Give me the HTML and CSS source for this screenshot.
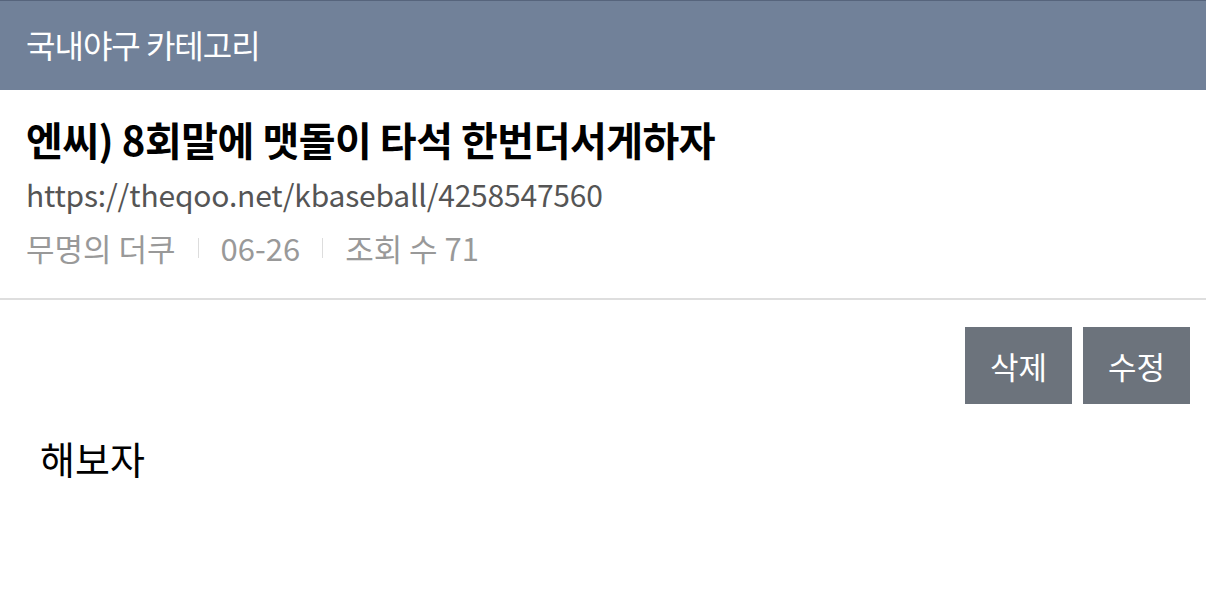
FILE: index.html
```html
<html>
<head>
   <meta charset="UTF-8">
   <title>국내야구 카테고리</title>
   <link rel="stylesheet" href="styles.css">
</head>
<body>

	<div class="top_bar">국내야구 카테고리</div>

	<div class="post_head">
		<h1 class="post_title">엔씨) 8회말에 맷돌이 타석 한번더서게하자</h1>
		<div class="post_url">https://theqoo.net/kbaseball/4258547560</div>
		<div class="post_meta">
			<span>무명의 더쿠</span>
			<span class="sep"></span>
			<span>06-26</span>
			<span class="sep"></span>
			<span>조회 수 71</span>
		</div>
	</div>

	<div class="post_btns">
		<button class="btn">삭제</button>
		<button class="btn">수정</button>
	</div>

	<div class="post_body">해보자</div>

</body>
</html>
```

FILE: styles.css
```css
body{
	margin: 0;
	background: #ffffff;
	font-family: "Noto Sans CJK KR", "Noto Sans", sans-serif;
	color: #000000;
}
.top_bar{
	height: 89px;
	border-top: 1px solid #56647c;
	background: #718199;
	color: #ffffff;
	font-size: 32px;
	line-height: 86px;
	padding-left: 26px;
	letter-spacing: -1px;
}
.post_head{
	padding: 21px 26px 0 26px;
	height: 187px;
	border-bottom: 2px solid #dedede;
}
.post_title{
	margin: 0;
	font-size: 40px;
	font-weight: bold;
	line-height: 56px;
	letter-spacing: -0.5px;
}
.post_url{
	font-size: 30px;
	color: #555555;
	line-height: 54px;
	letter-spacing: -0.2px;
}
.post_meta{
	font-size: 31px;
	color: #999999;
	line-height: 54px;
	display: flex;
	align-items: center;
}
.sep{
	width: 1px;
	height: 20px;
	background: #dddddd;
	margin: 0 22px;
}
.post_btns{
	display: flex;
	justify-content: flex-end;
	gap: 11px;
	padding: 27px 16px 0 0;
}
.btn{
	width: 107px;
	height: 77px;
	border: 0;
	background: #6c737c;
	color: #ffffff;
	font-family: "Noto Sans CJK KR", sans-serif;
	font-size: 31px;
	padding: 0;
}
.post_body{
	padding: 26px 0 0 40px;
	font-size: 38px;
	line-height: 56px;
}
```
